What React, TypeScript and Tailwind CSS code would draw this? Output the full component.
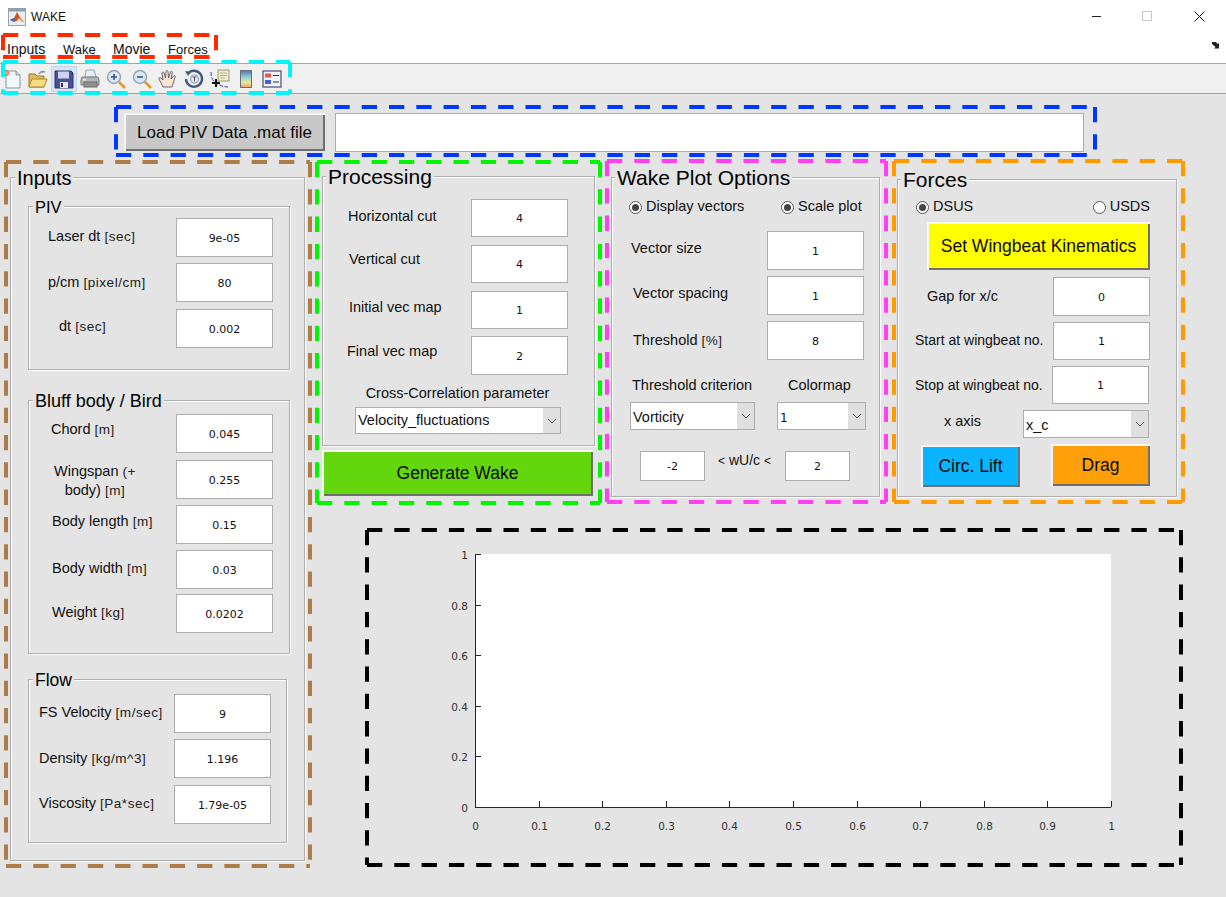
import type { ReactNode } from "react";

const sans = { fontFamily: '"Liberation Sans", Arial, sans-serif' };

function Dashed({ color, className, children }: { color: string; className: string; children?: ReactNode }) {
  const lines = [
    { x1: "0", y1: "0", x2: "100%", y2: "0" },
    { x1: "0", y1: "100%", x2: "100%", y2: "100%" },
    { x1: "0", y1: "0", x2: "0", y2: "100%" },
    { x1: "100%", y1: "0", x2: "100%", y2: "100%" },
  ];
  return (
    <div className={"box-border " + className}>
      {children}
      <svg className="absolute inset-0 w-full h-full overflow-visible pointer-events-none z-10">
        {lines.map((l, i) => (
          <line key={i} {...l} stroke={color} strokeWidth="4" strokeDasharray="15.3 12" />
        ))}
      </svg>
    </div>
  );
}

function Panel({ title, titleClass, className, children }: { title: string; titleClass: string; className: string; children: ReactNode }) {
  return (
    <div className={"relative box-border border border-[#adadad] shadow-[inset_1px_1px_0_#fff,1px_1px_0_#fff] " + className}>
      <span className={"absolute -translate-y-1/2 bg-[#e4e4e4] px-[2px] leading-none text-black " + titleClass}>{title}</span>
      {children}
    </div>
  );
}

function Box({ value, className = "w-[97px] h-[39px]" }: { value: string; className?: string }) {
  return (
    <div
      className={"box-border shrink-0 bg-white border border-[#adadad] flex items-center justify-center text-[11px] text-[#111] pt-[3px] " + className}
      style={{ fontFamily: '"DejaVu Sans", sans-serif' }}
    >
      {value}
    </div>
  );
}

function Unit({ children }: { children: string }) {
  return <span className="text-[13.5px] tracking-[0.04em] text-[#222]">{children}</span>;
}

function Field({
  label,
  value,
  labelClass,
  className = "",
  boxClass,
}: {
  label: ReactNode;
  value: string;
  labelClass: string;
  className?: string;
  boxClass?: string;
}) {
  return (
    <div className={"flex justify-between items-start " + className}>
      <div className={"leading-[20px] whitespace-nowrap text-[#111] " + labelClass}>{label}</div>
      <Box value={value} className={boxClass} />
    </div>
  );
}

function Select({ value, className, textClass = "pt-[0px]", small }: { value: string; className: string; textClass?: string; small?: boolean }) {
  return (
    <div className={"box-border shrink-0 flex bg-white border border-[#adadad] " + className}>
      <div
        className={"flex-1 flex items-center pl-[2px] text-[#111] " + (small ? "text-[12px] " : "text-[14.5px] ") + textClass}
        style={small ? { fontFamily: '"DejaVu Sans", sans-serif' } : undefined}
      >
        {value}
      </div>
      <div className="w-[17px] bg-[#dfdfdf] flex items-center justify-center">
        <svg width="10" height="6" viewBox="0 0 10 6">
          <path d="M1 1l4 4 4-4" fill="none" stroke="#555" strokeWidth="1" />
        </svg>
      </div>
    </div>
  );
}

function Radio({ label, on, className }: { label: string; on: boolean; className: string }) {
  return (
    <div className={"flex items-center h-[20px] " + className}>
      <div className="box-border w-[13px] h-[13px] rounded-full border border-[#555] bg-white flex items-center justify-center shrink-0">
        {on && <div className="w-[7px] h-[7px] rounded-full bg-[#444]" />}
      </div>
      <span className="ml-[4px] text-[14.5px] text-[#111] whitespace-nowrap">{label}</span>
    </div>
  );
}

function PushButton({ label, className }: { label: string; className: string }) {
  return (
    <div className={"box-border shrink-0 flex items-center justify-center text-[#0a0a0a] shadow-[inset_2px_2px_0_#f6f6f6,inset_-2px_-2px_0_#6f6f6f] whitespace-nowrap " + className}>
      {label}
    </div>
  );
}

function MatlabIcon() {
  return (
    <svg width="18" height="18" viewBox="0 0 18 18">
      <rect x="0.5" y="0.5" width="17" height="17" fill="#e8eef2" stroke="#9aa3aa" />
      <rect x="0.5" y="0.5" width="17" height="3" fill="#8da0ae" />
      <path d="M2 12l4-2 3-6 3 5 4 5-3-1-2-3-2 3z" fill="#d9541e" />
      <path d="M2 12l4-2 2 3-2 1z" fill="#3d6ea8" />
      <path d="M9 4l3 5 4 5-3-1z" fill="#f2a33a" />
    </svg>
  );
}

function ToolIcons() {
  const icons = [
    <svg key="new" width="20" height="20" viewBox="0 0 20 20">
      <path d="M4 2h10l4 4v13H4z" fill="#f4f8fc" stroke="#7f93ad" />
      <path d="M14 2v4h4" fill="#d5dfeb" stroke="#7f93ad" />
      <circle cx="4" cy="4" r="2.6" fill="#f0a070" stroke="#d87838" />
    </svg>,
    <svg key="open" width="20" height="20" viewBox="0 0 20 20">
      <path d="M1 5h6l2 2h7v11H1z" fill="#e2bb5c" stroke="#9a7a28" />
      <path d="M1 18l3-8h15l-3 8z" fill="#f7dc86" stroke="#a88a30" />
      <path d="M11 5c1-2 3-3 6-2" fill="none" stroke="#8593a5" strokeWidth="1.6" />
    </svg>,
    <svg key="save" width="20" height="20" viewBox="0 0 20 20">
      <path d="M1 2h16l2 2v15H1z" fill="#4a4f9c" stroke="#2d3070" />
      <rect x="4" y="2.5" width="11" height="7" fill="#cdd3ea" />
      <rect x="6" y="13" width="8" height="6" fill="#e6e8f2" />
      <rect x="7" y="14" width="2" height="4" fill="#2d3070" />
    </svg>,
    <svg key="print" width="20" height="20" viewBox="0 0 20 20">
      <path d="M6 1h8l2 7H5z" fill="#e4eef6" stroke="#9aa8b4" />
      <path d="M2 8h16l1 3v5H1v-5z" fill="#b5b5b5" stroke="#7e7e7e" />
      <rect x="4" y="13" width="13" height="5" fill="#8f8f8f" stroke="#6f6f6f" />
      <rect x="3" y="10" width="3" height="1.5" fill="#ececec" />
    </svg>,
    <svg key="zin" width="20" height="20" viewBox="0 0 20 20">
      <circle cx="8" cy="8" r="6.5" fill="#d8e8f4" stroke="#8fa5b8" strokeWidth="1.4" />
      <path d="M5 8h6M8 5v6" stroke="#33578c" strokeWidth="1.6" />
      <path d="M13 13l6 6" stroke="#e09a3a" strokeWidth="2.6" />
    </svg>,
    <svg key="zout" width="20" height="20" viewBox="0 0 20 20">
      <circle cx="8" cy="8" r="6.5" fill="#d8e8f4" stroke="#8fa5b8" strokeWidth="1.4" />
      <path d="M5 8h6" stroke="#33578c" strokeWidth="1.6" />
      <path d="M13 13l6 6" stroke="#e09a3a" strokeWidth="2.6" />
    </svg>,
    <svg key="hand" width="20" height="20" viewBox="0 0 20 20">
      <path d="M5 18L1 10c-.6-1.4 1-2 2-.8L5 11 4 4c0-1.2 1.6-1.4 2-.2L7.500 9 8 2.500c.1-1.300 1.800-1.300 2 0L10.500 9l2-6c.4-1.200 2-.8 1.800.4L13 10l2.500-3c.9-1 2.200 0 1.600 1.200L14 18z" fill="#fbe3cf" stroke="#5a5a6e" strokeWidth="0.9" />
    </svg>,
    <svg key="rotate" width="20" height="20" viewBox="0 0 20 20">
      <path d="M4 4.500A8 8 0 1 1 2 10" fill="none" stroke="#3f5a7d" strokeWidth="2.400" />
      <path d="M1 2l6 1-3 4z" fill="#3f5a7d" />
      <circle cx="10.500" cy="10" r="4" fill="none" stroke="#8aa0b8" strokeWidth="1.200" />
      <path d="M8.500 8h4M10.500 8v4.500" stroke="#3f5a7d" strokeWidth="1.200" />
    </svg>,
    <svg key="cursor" width="20" height="20" viewBox="0 0 20 20">
      <rect x="8" y="1" width="11" height="11" fill="#eeeccc" stroke="#9a9a70" />
      <path d="M10 4h7M10 6.500h7M10 9h5" stroke="#b5b58a" />
      <path d="M1 3c0 6 2 9 5 11 3 2 7 4 12 4" fill="none" stroke="#3340d8" strokeWidth="1" strokeDasharray="4 1.500" />
      <path d="M6 10v8M2 14h8" stroke="#111" strokeWidth="2" />
    </svg>,
    <svg key="bar" width="20" height="20" viewBox="0 0 20 20">
      <defs>
        <linearGradient id="cbar" x1="0" y1="0" x2="0" y2="1">
          <stop offset="0" stopColor="#5570c0" />
          <stop offset="0.4" stopColor="#8fd4cf" />
          <stop offset="0.7" stopColor="#f0e59a" />
          <stop offset="1" stopColor="#e8a070" />
        </linearGradient>
      </defs>
      <rect x="4.500" y="1.500" width="11" height="17" fill="url(#cbar)" stroke="#66707f" />
    </svg>,
    <svg key="legend" width="20" height="20" viewBox="0 0 20 20">
      <rect x="1" y="2" width="18" height="16" fill="#eef1f5" stroke="#445070" strokeWidth="1.200" />
      <rect x="3" y="4.500" width="6" height="4" fill="#e05858" />
      <rect x="3" y="11" width="6" height="4" fill="#4a60d8" />
      <path d="M11 6.500h6M11 13h6" stroke="#333" strokeWidth="1.200" />
    </svg>,
  ];
  return (
    <>
      {icons.map((icon, i) => (
        <div
          key={i}
          className={"box-border w-[26px] h-[26px] flex items-center justify-center " + (i === 2 ? "bg-[#d8e6f3] border border-[#bdd6ee]" : "")}
        >
          {icon}
        </div>
      ))}
    </>
  );
}

function Axes() {
  const xs = [0, 0.1, 0.2, 0.3, 0.4, 0.5, 0.6, 0.7, 0.8, 0.9, 1];
  const ys = [0, 0.2, 0.4, 0.6, 0.8, 1];
  const font = { fontFamily: '"DejaVu Sans", sans-serif', fontSize: 10.5, fill: "#333" };
  return (
    <svg width="814" height="335" className="block">
      <rect x="108" y="24" width="636" height="253" fill="#fff" />
      <path d="M108.500 24v253.500H744" fill="none" stroke="#262626" />
      {xs.map((v) => {
        const x = Math.round(108 + v * 636) + 0.5;
        return (
          <g key={v}>
            <path d={`M${x} 277v-6`} stroke="#262626" />
            <text x={x} y="300" textAnchor="middle" style={font}>{v}</text>
          </g>
        );
      })}
      {ys.map((v) => {
        const y = Math.round(277 - v * 253) + 0.5;
        return (
          <g key={v}>
            <path d={`M108 ${y}h6`} stroke="#262626" />
            <text x="101" y={y + 4} textAnchor="end" style={font}>{v}</text>
          </g>
        );
      })}
    </svg>
  );
}

export default function App() {
  return (
    <div className="relative w-[1226px] h-[897px] overflow-hidden bg-[#e4e4e4] flex flex-col text-[14.5px]" style={sans}>
      {/* title bar */}
      <div className="h-[36px] bg-white flex items-center shrink-0">
        <div className="ml-[8px] -mt-[2px]"><MatlabIcon /></div>
        <span className="ml-[5px] text-[12px] text-[#111] -mt-[2px]">WAKE</span>
        <div className="ml-auto flex items-center -mt-[4px]">
          <div className="w-[9px] h-[1px] bg-[#222]" />
          <div className="ml-[41px] box-border w-[10px] h-[10px] border border-[#c8c8c8]" />
          <svg className="ml-[42px] mr-[21px]" width="11" height="11" viewBox="0 0 11 11">
            <path d="M.5.500l10 10M10.500.500l-10 10" stroke="#111" />
          </svg>
        </div>
      </div>

      {/* menu */}
      <div className="h-[27px] bg-white flex items-center shrink-0">
        <Dashed color="#ff2a00" className="absolute left-[3px] top-[35px] w-[213px] h-[22px]" />
        <div className="ml-[7px] flex items-baseline text-[14px] text-[#111] -mt-[1px]">
          <span className="w-[56px]">Inputs</span>
          <span className="w-[50px] text-[13px]">Wake</span>
          <span className="w-[55px]">Movie</span>
          <span className="text-[13px]">Forces</span>
        </div>
        <svg className="ml-auto mr-[5px] -mt-[8px]" width="9" height="7" viewBox="0 0 9 7">
          <path d="M0 0h4l1.500 2L7 1v5.500H2l1.500-1.500L0 2z" fill="#222" />
        </svg>
      </div>

      {/* toolbar */}
      <div className="box-border h-[31px] bg-[#f0f0f0] border-y border-[#a3a3a3] flex items-center shrink-0">
        <Dashed color="#00f4f8" className="absolute left-[3px] top-[62px] w-[287px] h-[31px]" />
        <div className="-ml-[1px] flex"><ToolIcons /></div>
      </div>

      {/* load row */}
      <Dashed color="#0037ff" className="relative mt-[13px] ml-[116px] w-[979px] h-[48px] pl-[8px] pt-[6px] flex shrink-0">
        <PushButton label="Load PIV Data .mat file" className="w-[201px] h-[38px] pt-[2px] bg-[#c8c8c8] text-[17px]" />
        <div className="box-border ml-[10px] w-[749px] h-[39px] bg-white border border-[#adadad]" />
      </Dashed>

      <div className="mt-[7px] pl-[6px] flex items-start">
        {/* inputs column */}
        <Dashed color="#ae7c47" className="relative w-[304px] h-[704px] pl-[4px] pt-[15px]">
          <Panel title="Inputs" titleClass="left-[4px] top-0 text-[20px]" className="w-[295px] h-[684px] pt-[28px] pl-[17px]">
            <Panel title="PIV" titleClass="left-[4px] top-0 text-[16.5px]" className="w-[262px] h-[164px] pt-[11px] pr-[16px]">
              <Field label={<>Laser dt <Unit>[sec]</Unit></>} value="9e-05" labelClass="ml-[19px] mt-[8px]" />
              <Field label={<>p/cm <Unit>[pixel/cm]</Unit></>} value="80" labelClass="ml-[19px] mt-[9px]" className="mt-[6px]" />
              <Field label={<>dt <Unit>[sec]</Unit></>} value="0.002" labelClass="ml-[30px] mt-[7px]" className="mt-[7px]" />
            </Panel>
            <Panel title="Bluff body / Bird" titleClass="left-[4px] top-0 text-[18px]" className="mt-[30px] w-[262px] h-[254px] pt-[13px] pr-[16px]">
              <Field label={<>Chord <Unit>[m]</Unit></>} value="0.045" labelClass="ml-[22px] mt-[5px]" />
              <Field
                label={<div className="text-center leading-[18px]">Wingspan <Unit>(+</Unit><br />body) <Unit>[m]</Unit></div>}
                value="0.255"
                labelClass="ml-[25px] mt-[2px]"
                className="mt-[7px]"
              />
              <Field label={<>Body length <Unit>[m]</Unit></>} value="0.15" labelClass="ml-[23px] mt-[6px]" className="mt-[5px]" />
              <Field label={<>Body width <Unit>[m]</Unit></>} value="0.03" labelClass="ml-[23px] mt-[8px]" className="mt-[6px]" />
              <Field label={<>Weight <Unit>[kg]</Unit></>} value="0.0202" labelClass="ml-[23px] mt-[8px]" className="mt-[5px]" />
            </Panel>
            <Panel title="Flow" titleClass="left-[4px] top-[1px] text-[17.5px]" className="mt-[25px] w-[259px] h-[164px] pt-[14px] pr-[15px]">
              <Field label={<>FS Velocity <Unit>[m/sec]</Unit></>} value="9" labelClass="ml-[10px] mt-[8px]" />
              <Field label={<>Density <Unit>[kg/m^3]</Unit></>} value="1.196" labelClass="ml-[10px] mt-[9px]" className="mt-[6px]" />
              <Field label={<>Viscosity <Unit>[Pa*sec]</Unit></>} value="1.79e-05" labelClass="ml-[10px] mt-[8px]" className="mt-[7px]" />
            </Panel>
          </Panel>
        </Dashed>

        <div className="ml-[7px] flex flex-col">
          <div className="flex items-start">
            {/* processing */}
            <Dashed color="#00f500" className="relative w-[283px] h-[341px] pl-[5px] pt-[14px]">
              <Panel title="Processing" titleClass="left-[3px] -top-[1px] text-[21px]" className="w-[273px] h-[270px] pt-[22px] pr-[26px]">
                <Field label="Horizontal cut" value="4" labelClass="ml-[25px] mt-[7px]" boxClass="w-[97px] h-[38px]" />
                <Field label="Vertical cut" value="4" labelClass="ml-[26px] mt-[4px]" className="mt-[8px]" boxClass="w-[97px] h-[38px]" />
                <Field label="Initial vec map" value="1" labelClass="ml-[26px] mt-[6px]" className="mt-[8px]" boxClass="w-[97px] h-[38px]" />
                <Field label="Final vec map" value="2" labelClass="ml-[24px] mt-[5px]" className="mt-[7px]" boxClass="w-[97px] h-[39px]" />
                <div className="mt-[8px] -mr-[24px] h-[20px] leading-[20px] text-center text-[#111]">Cross-Correlation parameter</div>
                <Select value="Velocity_fluctuations" className="mt-[4px] ml-[32px] w-[206px] h-[27px]" />
              </Panel>
              <PushButton label="Generate Wake" className="mt-[4px] w-[271px] h-[46px] bg-[#64d60e] text-[17.5px]" />
            </Dashed>

            {/* wake plot options */}
            <Dashed color="#ff40f0" className="relative ml-[7px] -mt-[1px] w-[279px] h-[341px] pl-[4px] pt-[16px]">
              <Panel title="Wake Plot Options" titleClass="left-[3px] -top-[1px] text-[21px]" className="w-[269px] h-[320px] pt-[19px] pr-[15px]">
                <div className="flex ml-[17px]">
                  <Radio label="Display vectors" on className="w-[152px]" />
                  <Radio label="Scale plot" on className="" />
                </div>
                <Field label="Vector size" value="1" labelClass="ml-[19px] mt-[7px]" className="mt-[14px]" />
                <Field label="Vector spacing" value="1" labelClass="ml-[21px] mt-[7px]" className="mt-[6px]" />
                <Field label={<>Threshold <Unit>[%]</Unit></>} value="8" labelClass="ml-[21px] mt-[9px]" className="mt-[6px]" />
                <div className="mt-[15px] flex h-[20px] leading-[20px] text-[#111]">
                  <span className="ml-[20px] w-[156px]">Threshold criterion</span>
                  <span>Colormap</span>
                </div>
                <div className="mt-[7px] ml-[18px] flex gap-[22px]">
                  <Select value="Vorticity" textClass="pt-[3px]" className="w-[125px] h-[28px]" />
                  <Select value="1" small textClass="pt-[3px]" className="w-[89px] h-[28px]" />
                </div>
                <div className="mt-[21px] ml-[28px] flex items-start">
                  <Box value="-2" className="w-[65px] h-[30px]" />
                  <span className="ml-[13px] -mt-[1px] w-[56px] text-[14px] leading-[20px] whitespace-nowrap text-[#111]">
                    <span className="text-[12px]">&lt;</span> wU/c <span className="text-[12px]">&lt;</span>
                  </span>
                  <Box value="2" className="ml-[11px] w-[65px] h-[30px]" />
                </div>
              </Panel>
            </Dashed>

            {/* forces */}
            <Dashed color="#ff9a00" className="relative ml-[8px] -mt-[1px] w-[289px] h-[341px] pl-[3px] pt-[18px]">
              <Panel title="Forces" titleClass="left-[3px] -top-[1px] text-[21px]" className="w-[280px] h-[318px] pt-[17px] pr-[26px]">
                <div className="flex ml-[18px]">
                  <Radio label="DSUS" on className="w-[177px]" />
                  <Radio label="USDS" on={false} className="" />
                </div>
                <PushButton label="Set Wingbeat Kinematics" className="mt-[5px] ml-[29px] w-[223px] h-[48px] bg-[#ffff00] text-[17.5px]" />
                <Field label="Gap for x/c" value="0" labelClass="ml-[29px] mt-[9px]" className="mt-[7px]" />
                <Field label="Start at wingbeat no." value="1" labelClass="ml-[17px] mt-[8px] text-[14px]" className="mt-[6px]" boxClass="w-[97px] h-[38px]" />
                <Field label="Stop at wingbeat no." value="1" labelClass="ml-[17px] mt-[9px] text-[14px]" className="mt-[6px] mr-[1px]" boxClass="w-[97px] h-[38px]" />
                <div className="mt-[6px] mr-[1px] flex justify-between items-start">
                  <span className="ml-[46px] mt-[1px] leading-[20px] text-[#111]">x axis</span>
                  <Select value="x_c" textClass="pt-[3px]" className="w-[126px] h-[28px]" />
                </div>
                <div className="flex items-start mt-[7px]">
                  <PushButton label="Circ. Lift" className="ml-[23px] w-[99px] h-[42px] bg-[#0ab4ff] text-[17.5px]" />
                  <PushButton label="Drag" className="ml-[31px] -mt-[1px] w-[99px] h-[42px] bg-[#ff9f0a] text-[17.5px]" />
                </div>
              </Panel>
            </Dashed>
          </div>

          <Dashed color="#000" className="relative mt-[27px] ml-[50px] w-[814px] h-[335px]">
            <Axes />
          </Dashed>
        </div>
      </div>
    </div>
  );
}
